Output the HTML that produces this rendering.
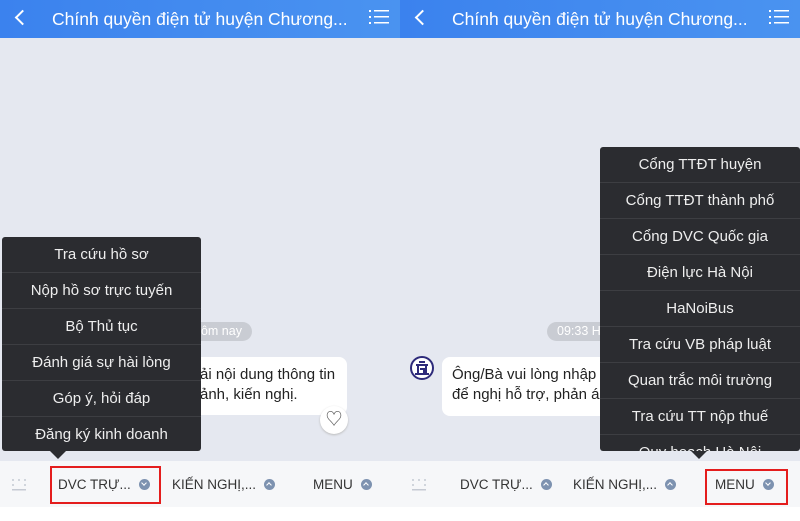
<!DOCTYPE html>
<html><head><meta charset="utf-8"><style>
*{margin:0;padding:0;box-sizing:border-box}
body{width:800px;height:521px;overflow:hidden;background:#fff;font-family:"Liberation Sans","Noto Sans CJK SC",sans-serif;position:relative}
.pane{position:absolute;top:0;width:400px;height:521px;overflow:hidden;background:#e5e8f0}
.hdr{position:absolute;left:0;top:0;width:400px;height:38px;background:linear-gradient(90deg,#3b82ee,#4a93f0);color:#fff}
.hdr .t{position:absolute;left:52px;top:9px;font-size:17.5px;white-space:nowrap}
.hdr .b{position:absolute;left:17px;top:12px;width:11px;height:11px;border-left:2px solid #fff;border-bottom:2px solid #fff;transform:rotate(45deg)}
.bar{position:absolute;left:0;top:461px;width:400px;height:46px;background:#f6f7f9}
.bot{position:absolute;left:0;top:507px;width:400px;height:14px;background:#fff}
.tab{position:absolute;top:477px;font-size:13.5px;color:#333;white-space:nowrap}
.ic{display:inline-block;width:11px;height:11px;border-radius:50%;background:#7d92b0;vertical-align:-1px;margin-left:4px;position:relative}
.ic:after{content:"";position:absolute;left:3px;top:2px;width:3px;height:3px;border-right:1.5px solid #fff;border-bottom:1.5px solid #fff;transform:rotate(45deg)}
.ic.up:after{top:4px;transform:rotate(-135deg)}
.menu{position:absolute;background:#2b2c30;border-radius:3px}
.menu div{height:36px;line-height:35px;text-align:center;color:#eee;font-size:15px;border-bottom:1px solid #3d3e42;white-space:nowrap;overflow:hidden}
.arr{position:absolute;width:0;height:0;border-left:8px solid transparent;border-right:8px solid transparent;border-top:8px solid #2b2c30}
.pill{position:absolute;height:19px;border-radius:10px;background:#c9ccd3;color:#fff;font-size:12.5px;line-height:19px;padding:0 10px}
.bub{position:absolute;background:#fff;border-radius:8px;font-size:15px;color:#222;line-height:20px;padding:8px 10px;white-space:nowrap;overflow:hidden}
.red{position:absolute;border:2px solid #e41d1d}
.kb{position:absolute;left:10px;top:478px;width:18px;height:14px}
</style></head><body>
<div class="pane" style="left:0">
 <div class="hdr"><div class="b"></div><div class="t">Chính quyền điện tử huyện Chương...</div>
  <svg style="position:absolute;left:369px;top:9px" width="20" height="16"><g fill="#fff"><rect x="0" y="1" width="2" height="2"/><rect x="0" y="7" width="2" height="2"/><rect x="0" y="13" width="2" height="2"/><rect x="5" y="1" width="15" height="1.5"/><rect x="5" y="7" width="15" height="1.5"/><rect x="5" y="13" width="15" height="1.5"/></g></svg></div>
 <div class="pill" style="left:180px;top:322px;padding-left:14px">hôm nay</div>
 <div class="bub" style="left:190px;top:357px;width:157px;height:58px;padding-left:10px">ải nội dung thông tin<br>ảnh, kiến nghị.</div>
 <div style="position:absolute;left:320px;top:406px;width:28px;height:28px;border-radius:50%;background:#fff;box-shadow:0 1px 2px #bbb;text-align:center;line-height:27px;font-size:17px;color:#555">♡</div>
 <div class="menu" style="left:2px;top:237px;width:199px;height:214px">
  <div>Tra cứu hồ sơ</div><div>Nộp hồ sơ trực tuyến</div><div>Bộ Thủ tục</div><div>Đánh giá sự hài lòng</div><div>Góp ý, hỏi đáp</div><div style="border:0">Đăng ký kinh doanh</div>
 </div>
 <div class="arr" style="left:50px;top:451px"></div>
 <div class="bar"></div><div class="bot"></div>
 <svg class="kb" viewBox="0 0 18 14"><g fill="#c5cad3"><circle cx="3" cy="2" r="1"/><circle cx="9" cy="2" r="1"/><circle cx="15" cy="2" r="1"/><circle cx="3" cy="7" r="1"/><circle cx="15" cy="7" r="1"/><rect x="2" y="11" width="14" height="1.5"/></g></svg>
 <div class="tab" style="left:58px">DVC TRỰ... <span class="ic"></span></div>
 <div class="tab" style="left:172px">KIẾN NGHỊ,... <span class="ic up"></span></div>
 <div class="tab" style="left:313px">MENU <span class="ic up"></span></div>
 <div class="red" style="left:50px;top:466px;width:111px;height:38px"></div>
</div>
<div class="pane" style="left:400px">
 <div class="hdr"><div class="b"></div><div class="t">Chính quyền điện tử huyện Chương...</div>
  <svg style="position:absolute;left:369px;top:9px" width="20" height="16"><g fill="#fff"><rect x="0" y="1" width="2" height="2"/><rect x="0" y="7" width="2" height="2"/><rect x="0" y="13" width="2" height="2"/><rect x="5" y="1" width="15" height="1.5"/><rect x="5" y="7" width="15" height="1.5"/><rect x="5" y="13" width="15" height="1.5"/></g></svg></div>
 <div class="pill" style="left:147px;top:322px;width:80px">09:33 H</div>
 <svg style="position:absolute;left:10px;top:356px" width="24" height="24"><circle cx="12" cy="12" r="11" fill="#fff" stroke="#2d2a7a" stroke-width="2"/><path d="M6 9h12M8 9v9M16 9v9M10 13h4v5M5 18h14M9 6h6" stroke="#2d2a7a" stroke-width="2" fill="none"/></svg>
 <div class="bub" style="left:42px;top:357px;width:170px;height:59px">Ông/Bà vui lòng nhập<br>để nghị hỗ trợ, phản á</div>
 <div class="menu" style="left:200px;top:147px;width:200px;height:304px;overflow:hidden">
  <div>Cổng TTĐT huyện</div><div>Cổng TTĐT thành phố</div><div>Cổng DVC Quốc gia</div><div>Điện lực Hà Nội</div><div>HaNoiBus</div><div>Tra cứu VB pháp luật</div><div>Quan trắc môi trường</div><div>Tra cứu TT nộp thuế</div><div>Quy hoạch Hà Nội</div>
 </div>
 <div class="arr" style="left:291px;top:451px"></div>
 <div class="bar"></div><div class="bot"></div>
 <svg class="kb" viewBox="0 0 18 14"><g fill="#c5cad3"><circle cx="3" cy="2" r="1"/><circle cx="9" cy="2" r="1"/><circle cx="15" cy="2" r="1"/><circle cx="3" cy="7" r="1"/><circle cx="15" cy="7" r="1"/><rect x="2" y="11" width="14" height="1.5"/></g></svg>
 <div class="tab" style="left:60px">DVC TRỰ... <span class="ic up"></span></div>
 <div class="tab" style="left:173px">KIẾN NGHỊ,... <span class="ic up"></span></div>
 <div class="tab" style="left:315px">MENU <span class="ic"></span></div>
 <div class="red" style="left:305px;top:469px;width:83px;height:36px"></div>
</div>
</body></html>
